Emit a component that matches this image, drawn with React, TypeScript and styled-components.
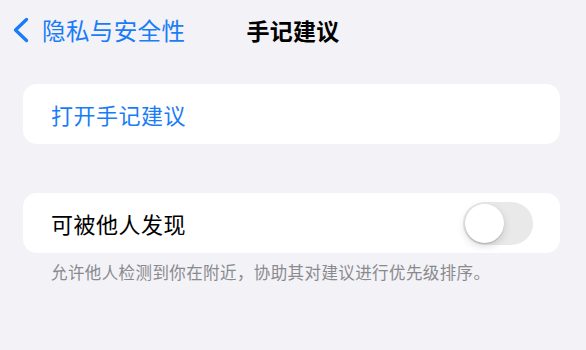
import React from "react";
import styled, { createGlobalStyle } from "styled-components";

const Global = createGlobalStyle`
  html, body { margin: 0; padding: 0; background: #f2f2f7; }
  body { font-family: "Noto Sans CJK SC", "Noto Sans", sans-serif; -webkit-font-smoothing: antialiased; }
`;

const Page = styled.div`
  width: 586px;
  height: 350px;
  background: #f2f2f7;
  display: flex;
  flex-direction: column;
`;

const NavBar = styled.div`
  height: 60px;
  display: grid;
  grid-template-columns: 1fr auto 1fr;
  align-items: center;
`;

const Back = styled.div`
  display: flex;
  align-items: center;
  gap: 13px;
  padding-left: 13px;
  color: #1a7cf6;
  font-size: 23.5px;
  letter-spacing: 0.4px;
`;

const Title = styled.div`
  font-size: 23px;
  font-weight: 700;
  color: #000;
  letter-spacing: 0.2px;
`;

const Content = styled.div`
  display: flex;
  flex-direction: column;
  padding: 24px 26px 0 23px;
`;

const Card = styled.div<{ $gap?: number }>`
  background: #fff;
  border-radius: 14px;
  height: 60px;
  display: flex;
  align-items: center;
  justify-content: space-between;
  padding: 0 27px 0 28px;
  margin-top: ${(p) => p.$gap ?? 0}px;
`;

const Label = styled.span<{ $blue?: boolean }>`
  font-size: 22px;
  color: ${(p) => (p.$blue ? "#1a7cf6" : "#000")};
  letter-spacing: 0.5px;
`;

const Footer = styled.div`
  font-size: 16.5px;
  color: #8a8a8e;
  padding: 7px 0 0 28px;
  letter-spacing: 0.4px;
`;

const Track = styled.div`
  width: 70px;
  height: 43px;
  border-radius: 22px;
  background: #e9e9ea;
  position: relative;
`;

const Knob = styled.div`
  position: absolute;
  left: 2px;
  top: 2px;
  width: 39px;
  height: 39px;
  border-radius: 50%;
  background: #fff;
  box-shadow: 0 3px 8px rgba(0,0,0,0.15), 0 1px 1px rgba(0,0,0,0.16);
`;

export default function App() {
  return (
    <Page>
      <Global />
      <NavBar>
        <Back>
          <svg width="16" height="26" viewBox="0 0 16 26">
            <path d="M13.5 2.5 L2.5 13 L13.5 23.5" fill="none" stroke="#1a7cf6" strokeWidth="3.3" strokeLinecap="round" strokeLinejoin="round" />
          </svg>
          <span>隐私与安全性</span>
        </Back>
        <Title>手记建议</Title>
        <div />
      </NavBar>
      <Content>
        <Card>
          <Label $blue>打开手记建议</Label>
        </Card>
        <Card $gap={49}>
          <Label>可被他人发现</Label>
          <Track><Knob /></Track>
        </Card>
        <Footer>允许他人检测到你在附近，协助其对建议进行优先级排序。</Footer>
      </Content>
    </Page>
  );
}
